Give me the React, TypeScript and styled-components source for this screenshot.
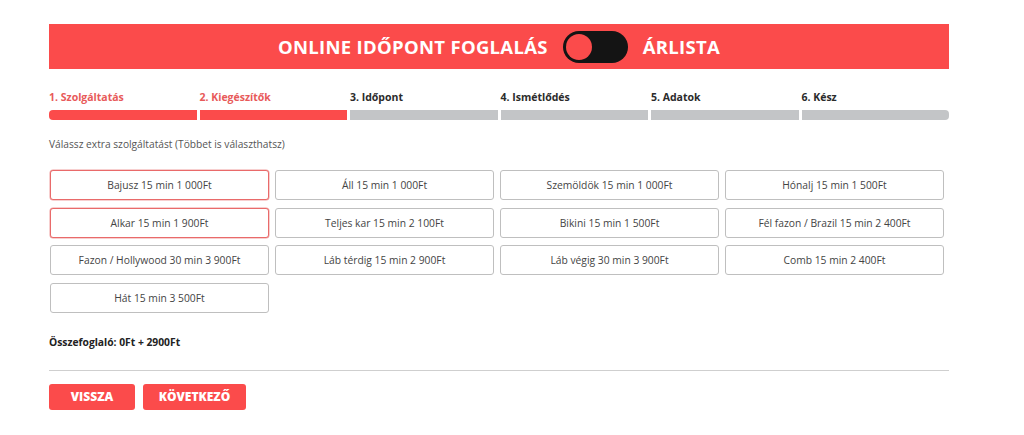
import React, { useState } from 'react';
import styled, { createGlobalStyle } from 'styled-components';

const RED = '#fb4b4b';

const GlobalStyle = createGlobalStyle`
  html, body {
    margin: 0;
    padding: 0;
    background: #ffffff;
    font-family: 'Open Sans', 'Liberation Sans', sans-serif;
  }
`;

const Page = styled.div`
  width: 900px;
  padding: 24px 0 0 49px;
`;

const Header = styled.div`
  height: 45px;
  background: ${RED};
  display: flex;
  align-items: center;
  justify-content: center;
  gap: 15px;
`;

const HeaderTitle = styled.span`
  color: #ffffff;
  font-family: 'Open Sans', sans-serif;
  font-weight: 700;
  font-size: 18.5px;
  letter-spacing: 0.3px;
`;

const Toggle = styled.button<{ $on: boolean }>`
  width: 65px;
  height: 32px;
  border: none;
  border-radius: 16px;
  background: #141414;
  padding: 0 3px;
  display: flex;
  align-items: center;
  justify-content: ${(p) => (p.$on ? 'flex-end' : 'flex-start')};
  cursor: pointer;
`;

const Knob = styled.span`
  width: 26px;
  height: 26px;
  border-radius: 50%;
  background: ${RED};
`;

const Steps = styled.div`
  display: grid;
  grid-template-columns: repeat(6, 1fr);
  column-gap: 3px;
  margin-top: 21px;
`;

const Step = styled.div`
  display: flex;
  flex-direction: column;
  gap: 6px;
`;

const StepLabel = styled.span<{ $done: boolean }>`
  font-size: 10.5px;
  font-weight: 700;
  color: ${(p) => (p.$done ? '#e85a5a' : '#2b2b2b')};
  line-height: 14px;
`;

const StepBar = styled.div<{ $done: boolean; $first: boolean; $last: boolean }>`
  height: 10px;
  background: ${(p) => (p.$done ? RED : '#c3c5c7')};
  border-radius: ${(p) => (p.$first ? '4px 0 0 4px' : p.$last ? '0 4px 4px 0' : '0')};
`;

const Hint = styled.p`
  margin: 17px 0 0 0;
  font-size: 10.2px;
  color: #555555;
  line-height: 14px;
`;

const OptionGrid = styled.div`
  display: grid;
  grid-template-columns: repeat(4, 219px);
  column-gap: 6px;
  row-gap: 7.5px;
  margin: 19px 0 0 1px;
`;

const Option = styled.button<{ $selected: boolean }>`
  height: 30px;
  background: #ffffff;
  border: 1px solid ${(p) => (p.$selected ? '#e96a6a' : '#bfbfbf')};
  box-shadow: ${(p) => (p.$selected ? '0 0 0 0.5px #f0a0a0' : 'none')};
  border-radius: 3px;
  font-family: 'Open Sans', sans-serif;
  font-size: 10.3px;
  color: #444444;
  cursor: pointer;
`;

const Summary = styled.div`
  margin-top: 22px;
  font-size: 10.3px;
  font-weight: 700;
  color: #222222;
`;

const Divider = styled.hr`
  margin: 21px 0 0 0;
  border: none;
  border-top: 1px solid #cfcfcf;
`;

const Actions = styled.div`
  display: flex;
  gap: 8px;
  margin-top: 13px;
`;

const ActionButton = styled.button<{ $w: number }>`
  width: ${(p) => p.$w}px;
  height: 26px;
  background: ${RED};
  border: none;
  border-radius: 3px;
  color: #ffffff;
  font-family: 'Open Sans', sans-serif;
  font-weight: 800;
  font-size: 12px;
  cursor: pointer;
`;

const steps = ['1. Szolgáltatás', '2. Kiegészítők', '3. Időpont', '4. Ismétlődés', '5. Adatok', '6. Kész'];

const options = [
  'Bajusz 15 min 1 000Ft',
  'Áll 15 min 1 000Ft',
  'Szemöldök 15 min 1 000Ft',
  'Hónalj 15 min 1 500Ft',
  'Alkar 15 min 1 900Ft',
  'Teljes kar 15 min 2 100Ft',
  'Bikini 15 min 1 500Ft',
  'Fél fazon / Brazil 15 min 2 400Ft',
  'Fazon / Hollywood 30 min 3 900Ft',
  'Láb térdig 15 min 2 900Ft',
  'Láb végig 30 min 3 900Ft',
  'Comb 15 min 2 400Ft',
  'Hát 15 min 3 500Ft',
];

export default function App() {
  const [priceList, setPriceList] = useState(false);
  const [selected, setSelected] = useState<number[]>([0, 4]);
  const current = 2;

  const toggle = (i: number) =>
    setSelected((s) => (s.includes(i) ? s.filter((x) => x !== i) : [...s, i]));

  return (
    <Page>
      <GlobalStyle />
      <Header>
        <HeaderTitle>ONLINE IDŐPONT FOGLALÁS</HeaderTitle>
        <Toggle $on={priceList} onClick={() => setPriceList(!priceList)}>
          <Knob />
        </Toggle>
        <HeaderTitle>ÁRLISTA</HeaderTitle>
      </Header>

      <Steps>
        {steps.map((s, i) => (
          <Step key={s}>
            <StepLabel $done={i < current}>{s}</StepLabel>
            <StepBar $done={i < current} $first={i === 0} $last={i === steps.length - 1} />
          </Step>
        ))}
      </Steps>

      <Hint>Válassz extra szolgáltatást (Többet is választhatsz)</Hint>

      <OptionGrid>
        {options.map((o, i) => (
          <Option key={o} $selected={selected.includes(i)} onClick={() => toggle(i)}>
            {o}
          </Option>
        ))}
      </OptionGrid>

      <Summary>Összefoglaló: 0Ft + 2900Ft</Summary>
      <Divider />

      <Actions>
        <ActionButton $w={86}>VISSZA</ActionButton>
        <ActionButton $w={103}>KÖVETKEZŐ</ActionButton>
      </Actions>
    </Page>
  );
}
